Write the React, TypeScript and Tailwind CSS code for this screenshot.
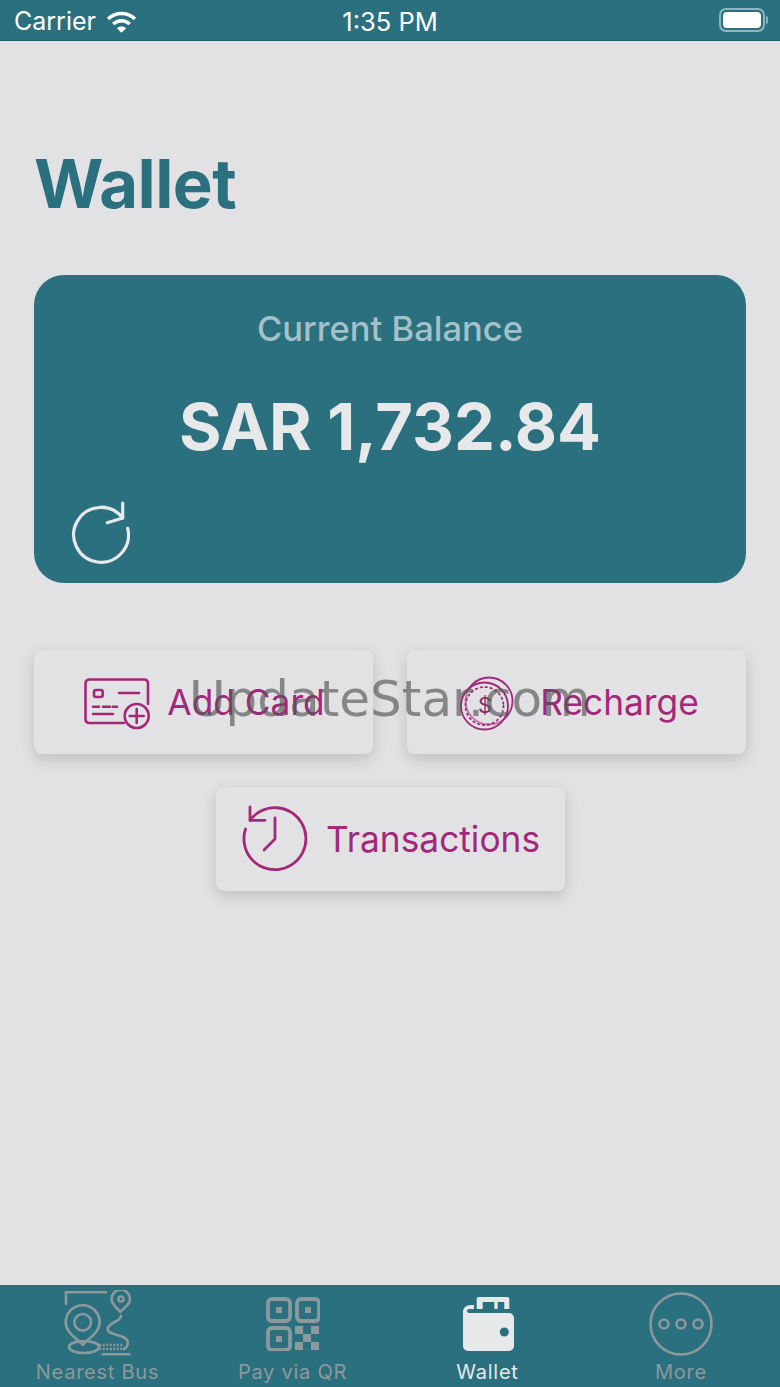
import React from "react"

const TEAL = "bg-[#2b707f]"

function WifiIcon() {
  return (
    <svg width="31" height="25" viewBox="0 0 30 24" fill="none" stroke="#fff" strokeWidth="3.4">
      <path d="M2 9.500C9.500 2.500 20.500 2.500 28 9.500" />
      <path d="M7 14.500C11.500 10.200 18.500 10.200 23 14.500" />
      <path d="M15 23L10.500 18.500C13 16.200 17 16.200 19.500 18.500Z" fill="#fff" stroke="none" />
    </svg>
  )
}

function BatteryIcon() {
  return (
    <div className="flex items-center gap-[1px]">
      <div className="w-[46px] h-[24px] rounded-[7px] border-2 border-[#8fb5bf] p-[2px]">
        <div className="w-full h-full bg-white rounded-[4px]" />
      </div>
      <div className="w-[2px] h-[8px] bg-[#8fb5bf] rounded-r-sm" />
    </div>
  )
}

function StatusBar() {
  return (
    <div className={`${TEAL} h-[41px] shrink-0 border-b border-[#1f5d6b] flex items-center justify-between pl-[14px] pr-[12px] text-white text-[25px] relative`}>
      <div className="flex items-center gap-[10px] pt-[3px]">
        <span>Carrier</span>
        <WifiIcon />
      </div>
      <span className="absolute left-0 right-0 text-center top-[3px] text-[25.500px]">1:35 PM</span>
      <BatteryIcon />
    </div>
  )
}

function RefreshIcon() {
  return (
    <svg width="60" height="64" viewBox="0 0 60 64" fill="none" stroke="#e6e8ea" strokeWidth="3.200" strokeLinecap="round" strokeLinejoin="round">
      <path d="M52.700 3V18L37.300 22.700" />
      <path d="M57.700 28.300A27.400 27.400 0 1 1 52.700 18C47.500 11.500 40 7.100 31 7.100" />
    </svg>
  )
}

function AddCardIcon() {
  return (
    <svg width="68" height="52" viewBox="-2 -1 68 52" className="overflow-visible" fill="none" stroke="#a3287a" strokeWidth="2.600" strokeLinecap="round">
      <path d="M40 45H5A4 4 0 0 1 1.500 41V5A4 4 0 0 1 5 1.500H60A4 4 0 0 1 64 5V26" />
      <rect x="10" y="12" width="8.700" height="7" rx="2" />
      <path d="M35 15H55" />
      <path d="M9 28.700H15M19 28.700H26M29 28.700H33" />
      <path d="M9 36H29" />
      <circle cx="52.700" cy="38" r="12" />
      <path d="M52.700 31V45M45.700 38H59.700" />
    </svg>
  )
}

function CoinIcon() {
  return (
    <svg width="56" height="56" viewBox="0 0 56 56" fill="none" stroke="#a3287a" strokeWidth="1.800">
      <circle cx="29" cy="26" r="23.500" />
      <circle cx="24.500" cy="31" r="23.500" fill="#e2e2e5" fillOpacity="0.4" />
      <circle cx="24.500" cy="31" r="19" strokeDasharray="1.500 3.500" strokeLinecap="round" />
      <text x="25" y="38" textAnchor="middle" fontSize="22" fill="#8a2a6a" stroke="none" fontFamily="Inter, sans-serif">$</text>
    </svg>
  )
}

function ClockIcon() {
  return (
    <svg width="66" height="66" viewBox="-2 2 66 66" className="overflow-visible" fill="none" stroke="#a3287a" strokeWidth="2.800" strokeLinecap="round" strokeLinejoin="round">
      <path d="M8 15.300A31 31 0 1 1 3.500 24" />
      <path d="M8 2V15.300H23" />
      <path d="M33 13V34L22 45" />
    </svg>
  )
}

function BusIcon() {
  return (
    <svg width="68" height="68" viewBox="0 0 68 68" fill="none" stroke="#8c999d" strokeWidth="2.600" strokeLinecap="round">
      <path d="M2 14V2.300H42" />
      <path d="M56.300 21.700C51 17 47.500 13.500 47.500 9A9.200 9.200 0 0 1 66 9C66 13.500 62 17 56.300 21.700Z" />
      <circle cx="57" cy="9" r="2.500" />
      <path d="M18.700 54.700C11 47 1.700 42 1.700 32.300A17 17 0 0 1 35.700 32.300C35.700 42 26.500 47 18.700 54.700Z" />
      <circle cx="18.700" cy="32.300" r="8.300" />
      <ellipse cx="20" cy="57" rx="15" ry="6" />
      <path d="M57 25.700C57 32 44 32 43.700 39C43.500 46 63 44 63.700 52C64 56 62 58 60 59" />
      <path d="M35.300 55H60" strokeDasharray="2 1.500" strokeLinecap="butt" />
      <path d="M35.300 59H60" strokeDasharray="2 1.500" strokeLinecap="butt" />
      <path d="M38.700 64.300H65.300" />
    </svg>
  )
}

function QrIcon() {
  const finder = (x: number, y: number) => (
    <g key={`${x}-${y}`}>
      <rect x={x} y={y} width="22" height="22" rx="4" fill="none" stroke="#8c999d" strokeWidth="3.800" />
      <rect x={x + 8} y={y + 8} width="6" height="6" fill="#8c999d" />
    </g>
  )
  return (
    <svg width="54" height="54" viewBox="0 0 54 54">
      {finder(2, 2)}
      {finder(31, 2)}
      {finder(2, 31)}
      <path d="M29 29H37V37H29ZM45 29H53V37H45ZM37 37H45V45H37ZM29 45H37V53H29ZM45 45H53V53H45Z" fill="#8c999d" />
    </svg>
  )
}

function WalletIcon() {
  return (
    <svg width="52" height="54" viewBox="0 0 52 54" fill="#e6e8ea">
      <path d="M14.700 12V2A2 2 0 0 1 16.700 0H45.300A2 2 0 0 1 47.300 2V12H42.300V5H35.700V12H32.300V5H20.700V12Z" />
      <path d="M9 8H12V12H7A2 2 0 0 0 7 16H47A5 5 0 0 1 52 21V49A5 5 0 0 1 47 54H6A5 5 0 0 1 1 49V15C1 11 4 8 9 8Z" />
      <circle cx="42.300" cy="35" r="4.500" fill="#2b707f" />
    </svg>
  )
}

function MoreIcon() {
  return (
    <svg width="64" height="64" viewBox="0 0 64 64" fill="none" stroke="#8c999d" strokeWidth="2.600">
      <circle cx="32" cy="32" r="30.500" />
      <circle cx="15" cy="32" r="4.500" />
      <circle cx="32" cy="32" r="4.500" />
      <circle cx="49" cy="32" r="4.500" />
    </svg>
  )
}

function ActionButton({ icon, label, className }: { icon: React.ReactNode; label: string; className: string }) {
  return (
    <div className={`h-[104px] pt-[2px] rounded-[8px] bg-[#e2e2e5] shadow-[0_5px_16px_rgba(0,0,0,0.16)] flex items-center justify-center text-[#a3287a] text-[35.300px] ${className}`}>
      {icon}
      <span>{label}</span>
    </div>
  )
}

function TabItem({ icon, label, active, className = "" }: { icon: React.ReactNode; label: string; active?: boolean; className?: string }) {
  return (
    <div className={`w-[195px] shrink-0 flex flex-col items-center ${className}`}>
      <div className="h-[68px] flex items-center justify-center">{icon}</div>
      <span className={`mt-[2px] text-[20px] leading-[24px] tracking-[0.75px] ${active ? "text-[#e6e8ea]" : "text-[#8c999d]"}`}>
        {label}
      </span>
    </div>
  )
}

export default function App() {
  return (
    <div className="relative w-[780px] h-[1387px] overflow-hidden bg-[#e2e2e5] flex flex-col font-['Inter',sans-serif]">
      <StatusBar />

      <div className="flex-1 px-[34px]">
        <h1 className="mt-[103px] text-[67px] leading-[80px] font-bold text-[#2b707f] tracking-[-0.5px]">Wallet</h1>

        <div className={`${TEAL} mt-[51px] h-[308px] rounded-[30px] flex flex-col items-center pt-[32px] relative`}>
          <span className="text-[34.500px] leading-[44px] font-medium text-[#a4c0c8]">Current Balance</span>
          <span className="mt-[36px] text-[65px] leading-[80px] font-bold text-[#e6e8ea]">SAR 1,732.84</span>
          <div className="absolute left-[36px] bottom-[19px]">
            <RefreshIcon />
          </div>
        </div>

        <div className="mt-[67px] flex justify-between">
          <ActionButton className="w-[339px] gap-[17px]" icon={<AddCardIcon />} label="Add Card" />
          <ActionButton className="w-[339px] gap-[24px] pl-[6px]" icon={<CoinIcon />} label="Recharge" />
        </div>
        <div className="mt-[33px] flex justify-center">
          <ActionButton className="w-[349px] gap-[20px]" icon={<ClockIcon />} label="Transactions" />
        </div>
      </div>

      <div className={`${TEAL} h-[102px] shrink-0 border-t border-[#3f6472] flex pt-[4px]`}>
        <TabItem icon={<BusIcon />} label="Nearest Bus" />
        <TabItem icon={<QrIcon />} label="Pay via QR" />
        <TabItem icon={<WalletIcon />} label="Wallet" active />
        <TabItem icon={<MoreIcon />} label="More" className="pr-[3px]" />
      </div>

      <div className="absolute left-[189px] top-[669px] text-[50px] leading-[60px] text-[rgba(85,85,85,0.65)] font-['DejaVu_Sans',sans-serif] whitespace-nowrap">
        UpdateStar.com
      </div>
    </div>
  )
}
